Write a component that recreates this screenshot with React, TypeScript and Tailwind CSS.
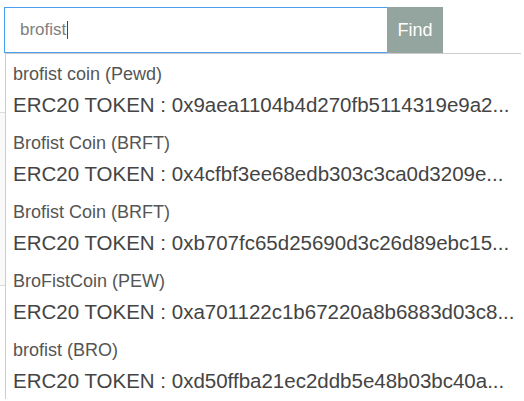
import React from 'react';

interface TokenResult {
  name: string;
  address: string;
}

const RESULTS: TokenResult[] = [
  { name: 'brofist coin (Pewd)', address: '0x9aea1104b4d270fb5114319e9a2...' },
  { name: 'Brofist Coin (BRFT)', address: '0x4cfbf3ee68edb303c3ca0d3209e...' },
  { name: 'Brofist Coin (BRFT)', address: '0xb707fc65d25690d3c26d89ebc15...' },
  { name: 'BroFistCoin (PEW)', address: '0xa701122c1b67220a8b6883d03c8...' },
  { name: 'brofist (BRO)', address: '0xd50ffba21ec2ddb5e48b03bc40a...' },
];

export default function App() {
  return (
    <div className="relative h-[401px] overflow-hidden bg-white font-['Liberation_Sans',Arial,sans-serif]">
      <div className="flex pl-[4px] pt-[7px]">
        <div className="flex h-[46px] w-[383px] items-center border border-r-0 border-[#4a9ef2] pl-[15px] text-[17px] text-[#808080]">
          <span>brofist</span>
          <span className="ml-px h-[18px] w-px bg-[#444]" />
        </div>
        <button
          type="button"
          className="h-[46px] w-[56px] bg-[#94a49e] text-[18px] text-white"
        >
          Find
        </button>
      </div>

      {/* page card peeking out from behind the dropdown */}
      <div className="mt-[59px] h-[174px] w-[200px] border-y border-[#dcdcdc] bg-[#f9f9f9]" />

      <ul className="absolute left-[5px] top-[53px] w-[516px] border-l border-t border-[#cccccc] bg-white">
        {RESULTS.map((item, i) => (
          <li key={i} className="pb-[4px] pl-[7px] pt-[9px]">
            <div className="h-[22px] text-[18px] leading-[22px] text-[#555]">{item.name}</div>
            <div className="mt-[6px] h-[28px] whitespace-nowrap text-[20.5px] leading-[28px] text-[#444]">
              ERC20 TOKEN : {item.address}
            </div>
          </li>
        ))}
      </ul>
    </div>
  );
}
